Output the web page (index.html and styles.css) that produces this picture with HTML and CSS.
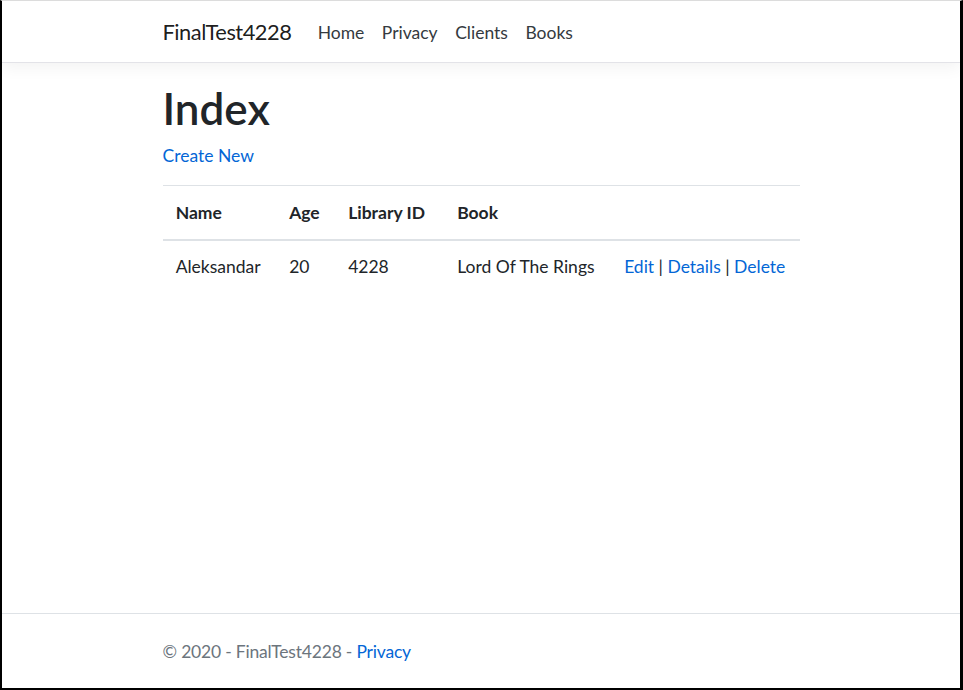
FILE: index.html
```html
<!DOCTYPE html>
<html lang="en">
<head>
<meta charset="utf-8">
<title>Index - FinalTest4228</title>
<link rel="stylesheet" href="styles.css">
</head>
<body>
<div class="frame">
  <header>
    <nav class="navbar">
      <div class="container nav-inner">
        <a class="brand" href="#">FinalTest4228</a>
        <ul class="nav">
          <li><a class="nav-link" href="#">Home</a></li>
          <li><a class="nav-link" href="#">Privacy</a></li>
          <li><a class="nav-link" href="#">Clients</a></li>
          <li><a class="nav-link" href="#">Books</a></li>
        </ul>
      </div>
    </nav>
  </header>
  <div class="container main">
    <main>
      <h1>Index</h1>
      <p class="create"><a href="#">Create New</a></p>
      <table class="table">
        <colgroup>
          <col class="c-name"><col class="c-age"><col class="c-lib"><col class="c-book"><col>
        </colgroup>
        <thead>
          <tr><th>Name</th><th>Age</th><th>Library ID</th><th>Book</th><th></th></tr>
        </thead>
        <tbody>
          <tr>
            <td>Aleksandar</td>
            <td>20</td>
            <td>4228</td>
            <td>Lord Of The Rings</td>
            <td><a href="#">Edit</a> | <a href="#">Details</a> | <a href="#">Delete</a></td>
          </tr>
        </tbody>
      </table>
    </main>
  </div>
  <footer class="footer">
    <div class="container">© 2020 - FinalTest4228 - <a href="#">Privacy</a></div>
  </footer>
</div>
</body>
</html>
```

FILE: styles.css
```css
html, body {
  margin: 0;
  padding: 0;
  background: #fff;
}
body {
  font-family: Lato, "Noto Sans", "Liberation Sans", sans-serif;
  font-size: 17.5px;
  line-height: 1.5;
  color: #212529;
}
a {
  color: #0366d6;
  text-decoration: none;
}
.frame {
  height: 690px;
  box-sizing: border-box;
  border-left: 2px solid #000;
  border-right: 3px solid #000;
  border-bottom: 2px solid #000;
  border-top: 1px solid #dcdcdc;
  display: flex;
  flex-direction: column;
  overflow: hidden;
}
.container {
  width: 637px;
  margin: 0 auto;
}
.navbar {
  padding: 10px 0 7px;
  border-bottom: 1px solid #e3e3e8;
  box-shadow: 0 5px 15px rgba(0, 0, 0, 0.05);
  margin-bottom: 17.5px;
  background: #fff;
}
.nav-inner {
  display: flex;
  align-items: center;
}
.brand {
  font-size: 21.875px;
  line-height: 32.8px;
  padding: 5.47px 0;
  margin-right: 17.5px;
  letter-spacing: -0.5px;
  color: rgba(0, 0, 0, 0.9);
}
.nav {
  display: flex;
  list-style: none;
  margin: 0;
  padding: 0;
}
.nav-link {
  display: block;
  padding: 8.75px;
  color: #343a40;
}
.main {
  flex: 1;
}
h1 {
  font-size: 44px;
  font-weight: 600;
  line-height: 52.5px;
  padding-top: 1.5px;
  margin: 0 0 7.25px;
}
.create {
  padding-top: 1px;
  margin: 0 0 16.5px;
}
.table {
  width: 100%;
  table-layout: fixed;
  border-collapse: collapse;
  margin-bottom: 17.5px;
}
.c-name { width: 113.5px; }
.c-age { width: 59px; }
.c-lib { width: 109px; }
.c-book { width: 167px; }
.table th,
.table td {
  padding: 13.125px;
  text-align: left;
  vertical-align: top;
  border-top: 1px solid #dee2e6;
  white-space: nowrap;
}
.table th {
  font-weight: 700;
}
.table thead th {
  vertical-align: bottom;
  padding-top: 14px;
  padding-bottom: 12.25px;
  border-bottom: 2px solid #dee2e6;
}
.footer {
  border-top: 1px solid #dee2e6;
  padding-top: 1px;
  line-height: 73px;
  color: #6c757d;
  letter-spacing: -0.2px;
  white-space: nowrap;
}
```
